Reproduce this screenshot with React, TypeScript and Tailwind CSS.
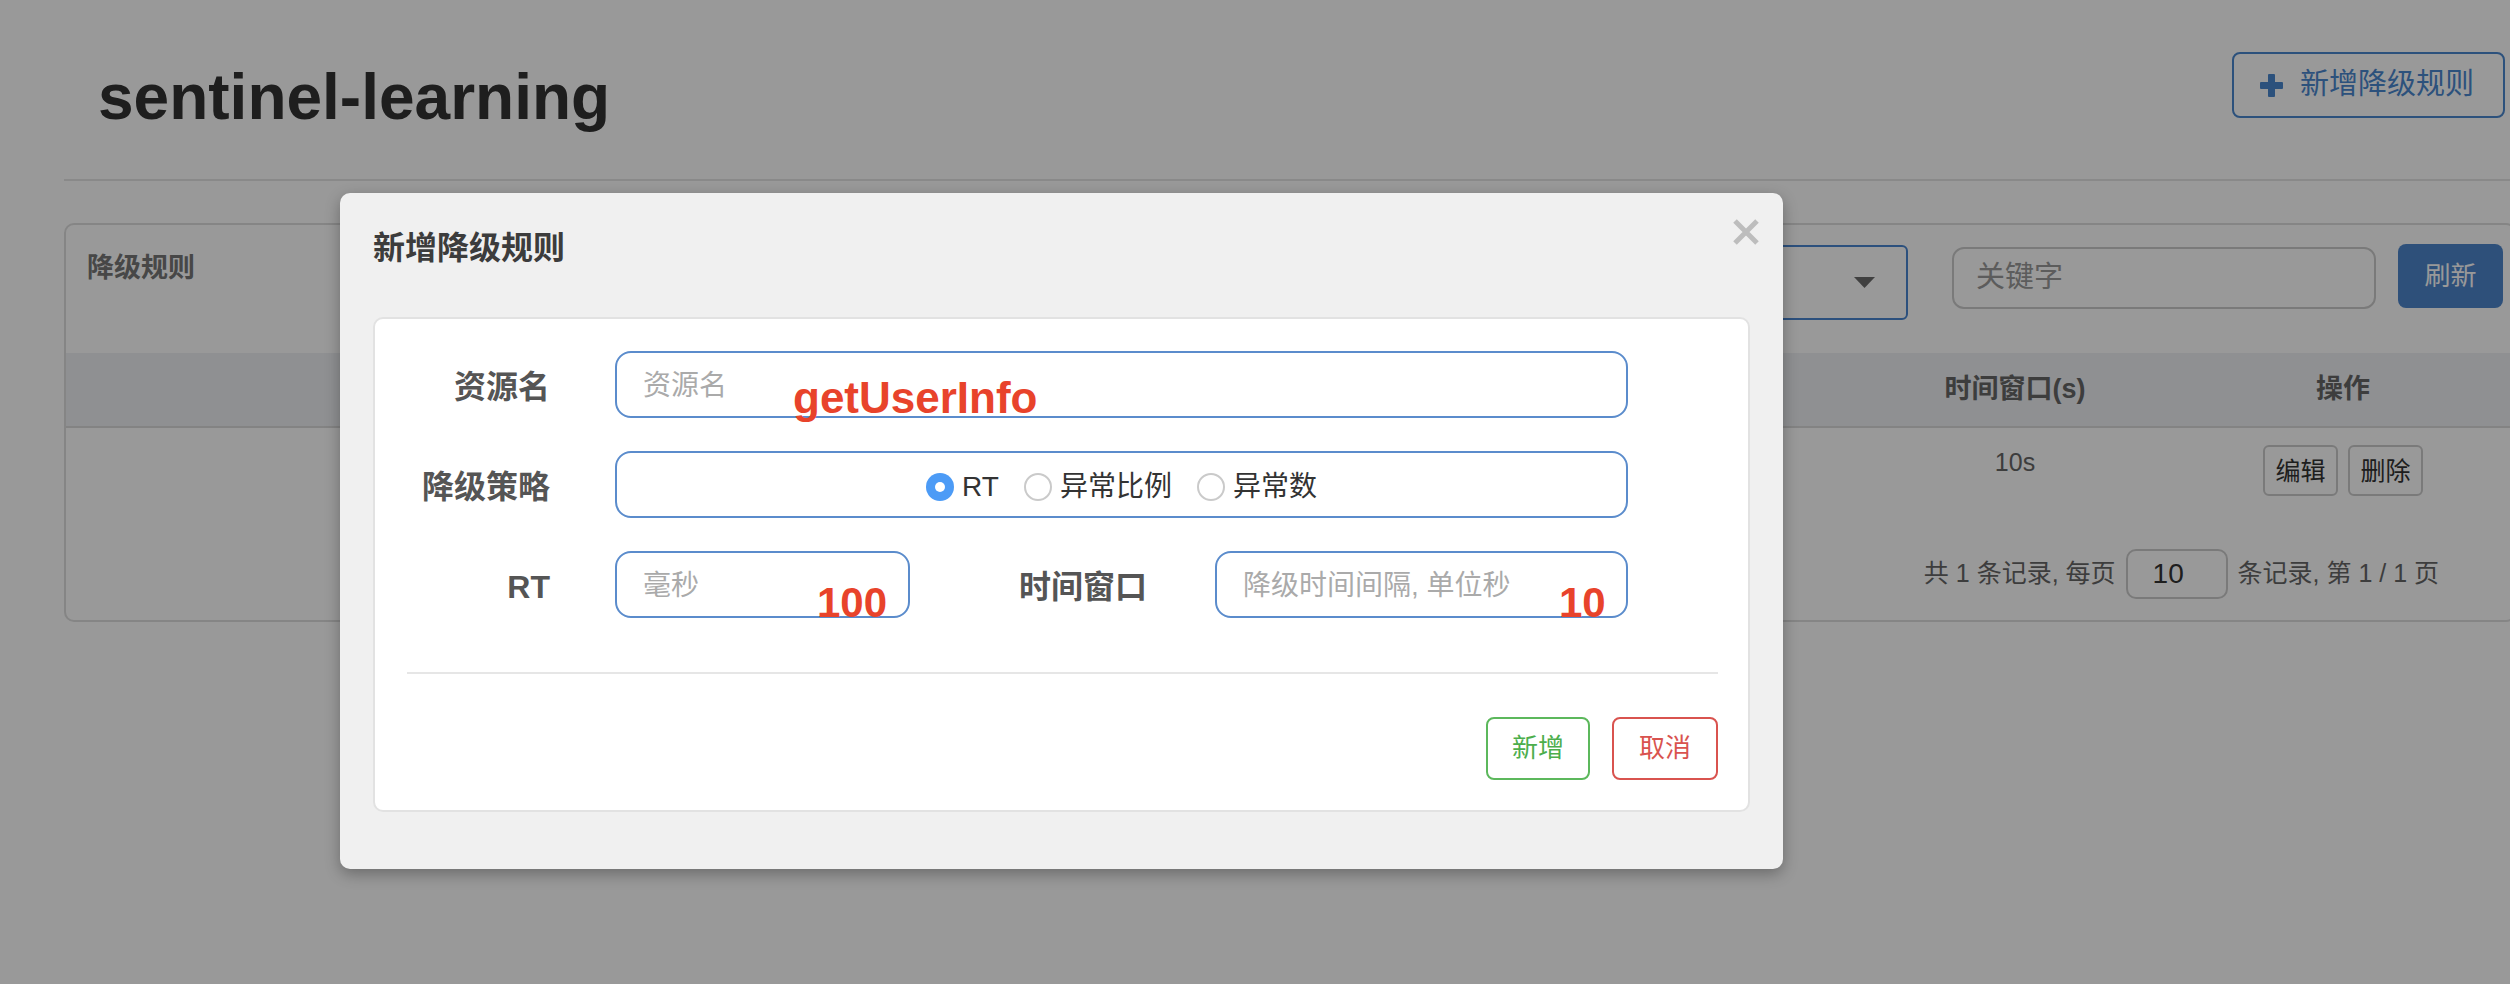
import React from "react";

const FONT = "font-['Liberation_Sans','Noto_Sans_CJK_SC',sans-serif]";

// only the last two columns show beside the dialog
const COLUMNS = ["", "", "", "时间窗口(s)", "操作"];

function PlusIcon() {
  return (
    <svg width="23" height="23" viewBox="0 0 23 23">
      <rect x="8" y="0" width="7" height="23" rx="1" fill="#4a87cf" />
      <rect x="0" y="8" width="23" height="7" rx="1" fill="#4a87cf" />
    </svg>
  );
}

function CloseIcon() {
  return (
    <svg width="28" height="28" viewBox="0 0 28 28">
      <path d="M3 3 L25 25 M25 3 L3 25" stroke="#bdbdbd" strokeWidth="5" />
    </svg>
  );
}

function Radio({ checked, label }: { checked?: boolean; label: string }) {
  return (
    <label className="flex items-center gap-[8px]">
      {checked ? (
        <span className="flex h-[28px] w-[28px] items-center justify-center rounded-full bg-[#4c9bf6]">
          <span className="h-[10px] w-[10px] rounded-full bg-white" />
        </span>
      ) : (
        <span className="h-[28px] w-[28px] rounded-full border-2 border-[#cacaca] bg-white" />
      )}
      <span className="text-[28px] text-[#333]">{label}</span>
    </label>
  );
}

export default function App() {
  return (
    <div className={`relative h-[984px] w-full overflow-hidden bg-white ${FONT}`}>
      {/* Page underneath */}
      <div className="w-[2580px] px-[64px] pt-[52px]">
        <div className="mr-[11px] flex items-start justify-between">
          <h1 className="ml-[34px] mt-[13px] text-[64px] font-bold leading-[64px] text-[#333]">
            sentinel-learning
          </h1>
          <button className="flex h-[66px] w-[273px] items-center gap-[17px] rounded-[8px] border-2 border-[#4a87cf] pl-[26px] text-[29px] text-[#4a87cf]">
            <PlusIcon />
            新增降级规则
          </button>
        </div>
        <div className="mt-[50px] h-[2px] bg-[#e5e5e5]" />

        {/* Panel */}
        <div className="mt-[42px] rounded-[10px] border-2 border-[#dedede]">
          <div className="flex h-[128px] justify-between">
            <div className="pl-[21px] pt-[25px] text-[27px] font-bold leading-[36px] text-[#777]">
              降级规则
            </div>
            <div className="flex items-start pr-[11px] pt-[20px]">
              <div className="flex h-[75px] w-[400px] items-center justify-end rounded-[6px] border-2 border-[#4a86d0] pr-[31px]">
                <svg width="21" height="11" viewBox="0 0 21 11">
                  <polygon points="0,0 21,0 10.5,11" fill="#6b6b6b" />
                </svg>
              </div>
              <div className="ml-[44px] mt-[2px] flex h-[62px] w-[424px] items-center rounded-[12px] border-2 border-[#ccc] pl-[22px] text-[29px] text-[#999]">
                关键字
              </div>
              <button className="ml-[22px] -mt-[1px] h-[64px] w-[105px] rounded-[8px] bg-[#4d86cc] text-[26px] text-white">
                刷新
              </button>
            </div>
          </div>

          {/* Table */}
          <div className="grid h-[75px] grid-cols-[700px_560px_532px_314px_342px] items-center border-b-2 border-[#dadada] bg-[#eef0f4] text-center text-[27px] font-bold text-[#666]">
            {COLUMNS.map((c, i) => (
              <div key={i}>{c}</div>
            ))}
          </div>
          <div className="grid h-[97px] grid-cols-[700px_560px_532px_314px_342px] text-center text-[25px] leading-[36px] text-[#666]">
            <div />
            <div />
            <div />
            <div className="pt-[16px]">10s</div>
            <div className="flex justify-center gap-[10px] pt-[17px]">
              <button className="h-[51px] w-[75px] rounded-[6px] border-2 border-[#ccc] text-[25px] text-[#333]">
                编辑
              </button>
              <button className="h-[51px] w-[75px] rounded-[6px] border-2 border-[#ccc] text-[25px] text-[#333]">
                删除
              </button>
            </div>
          </div>
          <div className="flex items-center justify-end gap-[10px] pb-[21px] pr-[75px] pt-[24px] text-[25px] text-[#666]">
            <span>共 1 条记录, 每页</span>
            <div className="flex h-[50px] w-[102px] items-center rounded-[10px] border-2 border-[#ccc] pl-[25px] text-[28px] text-[#333]">
              10
            </div>
            <span>条记录, 第 1 / 1 页</span>
          </div>
        </div>
      </div>

      {/* Backdrop */}
      <div className="absolute inset-0 bg-black/40" />

      {/* Modal */}
      <div className="absolute left-[340px] top-[193px] w-[1443px] rounded-[10px] bg-[#f0f0f0] px-[33px] pb-[57px] shadow-[0_5px_15px_rgba(0,0,0,0.3)]">
        <div className="h-[124px] pt-[33px]">
          <h2 className="text-[32px] font-bold leading-[44px] text-[#3c3c3c]">新增降级规则</h2>
        </div>
        <button className="absolute right-[23px] top-[25px]">
          <CloseIcon />
        </button>

        <div className="rounded-[10px] border-2 border-[#e2e2e2] bg-white pb-[30px] pl-[32px] pr-[30px] pt-[32px]">
          {/* 资源名 */}
          <div className="flex h-[67px] items-center">
            <div className="w-[143px] pt-[5px] text-right text-[32px] font-bold text-[#555]">资源名</div>
            <div className="relative ml-[65px] flex h-[67px] w-[1013px] items-center rounded-[16px] border-2 border-[#5b8ccc] pl-[26px] pt-[2px] text-[28px] text-[#aaa]">
              资源名
              <span className="absolute left-[176px] top-[23px] text-[44px] font-bold leading-[44px] text-[#e8432b]">
                getUserInfo
              </span>
            </div>
          </div>

          {/* 降级策略 */}
          <div className="mt-[33px] flex h-[67px] items-center">
            <div className="w-[143px] pt-[5px] text-right text-[32px] font-bold text-[#555]">降级策略</div>
            <div className="ml-[65px] flex h-[67px] w-[1013px] items-center justify-center gap-[25px] rounded-[16px] border-2 border-[#5b8ccc] pt-[4px]">
              <Radio checked label="RT" />
              <Radio label="异常比例" />
              <Radio label="异常数" />
            </div>
          </div>

          {/* RT / 时间窗口 */}
          <div className="mt-[33px] flex h-[67px] items-center">
            <div className="w-[143px] pt-[5px] text-right text-[32px] font-bold text-[#555]">RT</div>
            <div className="relative ml-[65px] flex h-[67px] w-[295px] items-center rounded-[16px] border-2 border-[#5b8ccc] pl-[26px] pt-[2px] text-[28px] text-[#aaa]">
              毫秒
              <span className="absolute left-[200px] top-[29px] text-[42px] font-bold leading-[42px] text-[#e8432b]">
                100
              </span>
            </div>
            <div className="w-[237px] pt-[5px] text-right text-[32px] font-bold text-[#555]">时间窗口</div>
            <div className="relative ml-[68px] flex h-[67px] w-[413px] items-center rounded-[16px] border-2 border-[#5b8ccc] pl-[26px] pt-[2px] text-[28px] text-[#aaa]">
              降级时间间隔, 单位秒
              <span className="absolute left-[342px] top-[29px] text-[42px] font-bold leading-[42px] text-[#e8432b]">
                10
              </span>
            </div>
          </div>

          <div className="mt-[54px] h-[2px] bg-[#e6e6e6]" />

          <div className="mt-[43px] flex justify-end gap-[22px]">
            <button className="h-[63px] w-[104px] rounded-[8px] border-2 border-[#5cb85c] bg-white text-[26px] text-[#4cae4c]">
              新增
            </button>
            <button className="h-[63px] w-[106px] rounded-[8px] border-2 border-[#d9534f] bg-white text-[26px] text-[#d9534f]">
              取消
            </button>
          </div>
        </div>
      </div>
    </div>
  );
}
